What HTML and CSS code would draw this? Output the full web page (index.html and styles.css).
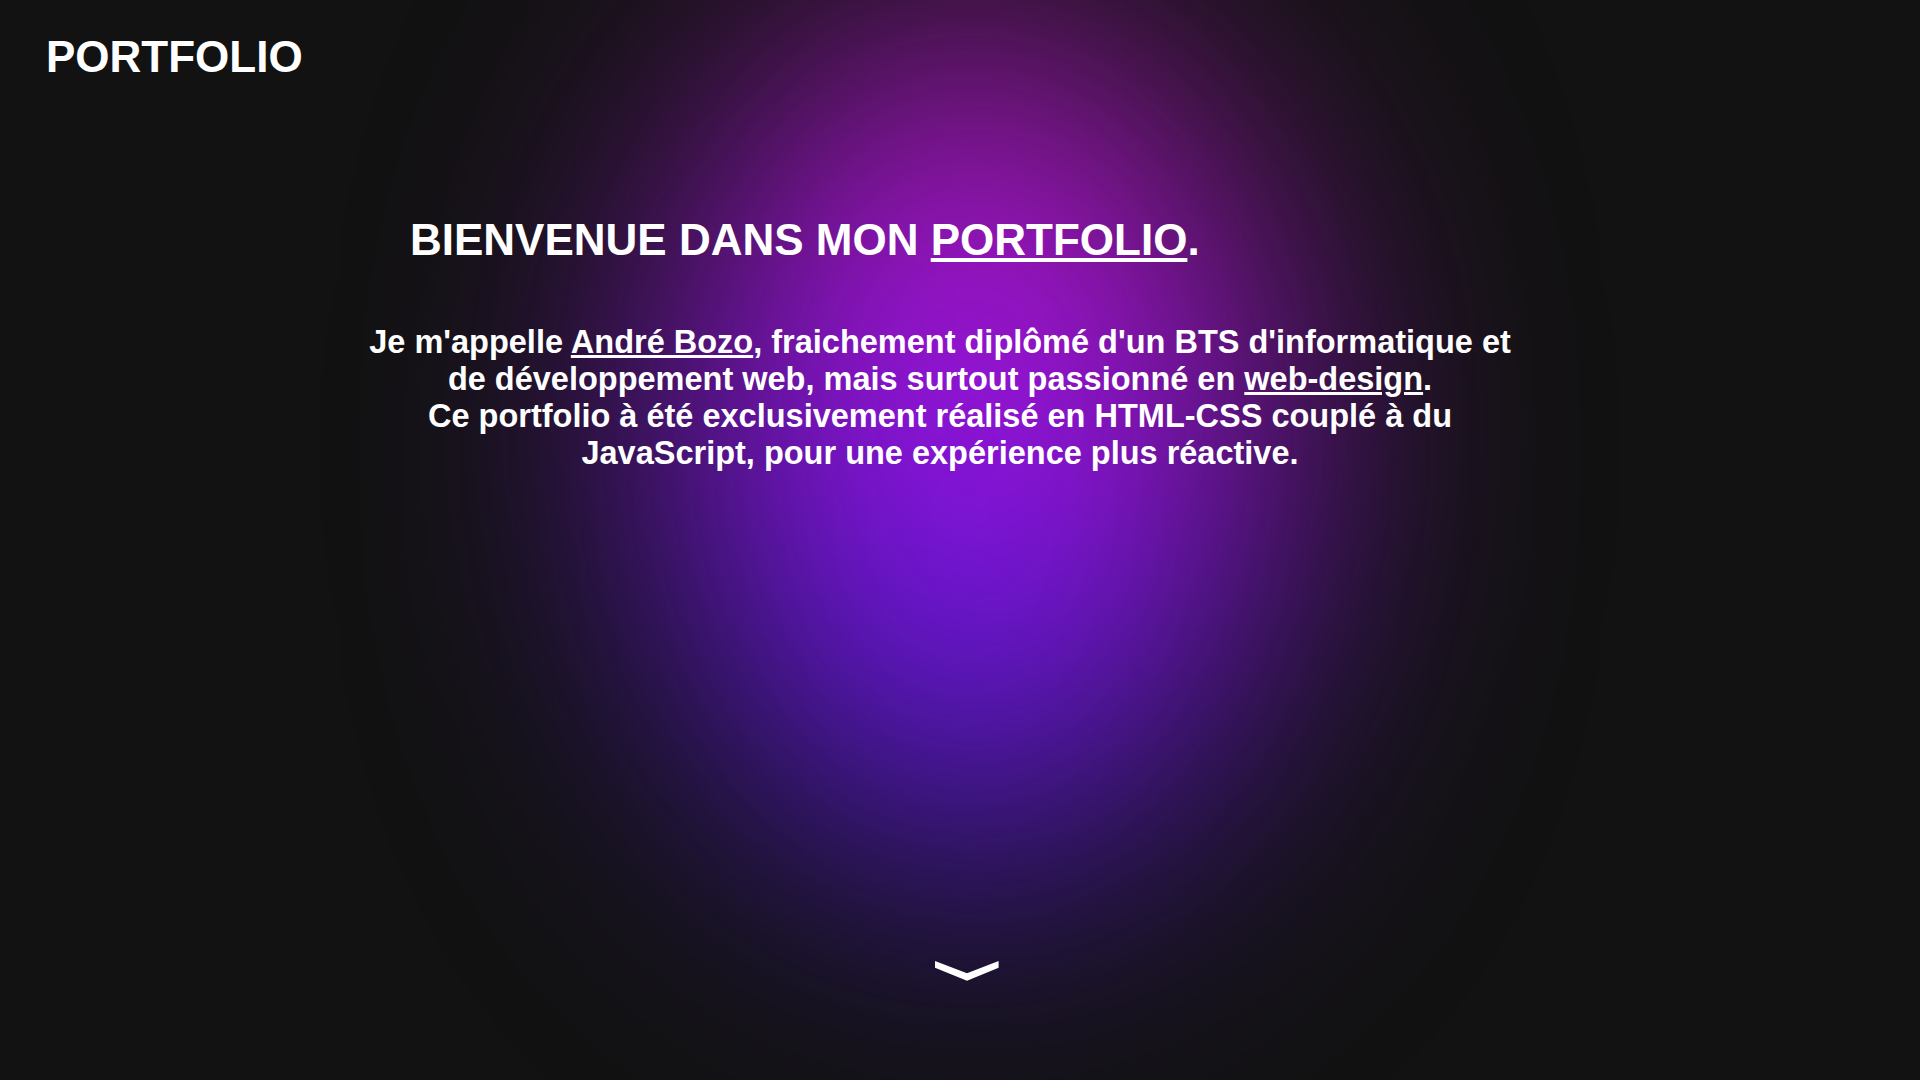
FILE: index.html
```html
<!DOCTYPE html>
<html lang="fr">
<head>
<meta charset="utf-8">
<title>Portfolio - André Bozo</title>
<link rel="stylesheet" href="styles.css">
</head>
<body>
<section class="hero">
  <div class="glow"></div>
  <header class="site-header">
    <div class="logo">PORTFOLIO</div>
  </header>
  <div class="intro">
    <h1 class="intro-title">BIENVENUE DANS MON <a href="#" class="link">PORTFOLIO</a>.</h1>
    <p class="intro-text">Je m'appelle <a href="#" class="link">André Bozo</a>, fraichement diplômé d'un BTS d'informatique et de développement web, mais surtout passionné en <a href="#" class="link">web-design</a>.<br>Ce portfolio à été exclusivement réalisé en HTML-CSS couplé à du JavaScript, pour une expérience plus réactive.</p>
  </div>
  <div class="scroll-down">
    <svg class="chevron" width="64" height="20" viewBox="0 0 64 20"><polygon points="0,0 32,12.2 63.6,0 63.6,6.8 32,19.8 0,6.8" fill="#ffffff"/></svg>
  </div>
</section>
<section class="page-section"></section>
<section class="page-section"></section>
<section class="page-section"></section>
<section class="page-section"></section>
</body>
</html>
```

FILE: styles.css
```css
html {
  background: #121212;
}
::-webkit-scrollbar {
  width: 12px;
}
::-webkit-scrollbar-track {
  background: #151515;
}
::-webkit-scrollbar-thumb {
  background: #2e2e2e;
  border-radius: 6px;
}
body {
  margin: 0;
  background: #121212;
  color: #ffffff;
  font-family: "Liberation Sans", Arial, sans-serif;
  font-weight: bold;
  overflow-x: hidden;
}
.hero {
  position: relative;
  min-height: 100vh;
  display: flex;
  flex-direction: column;
  overflow: hidden;
}
.glow {
  position: absolute;
  left: 670px;
  top: 30px;
  width: 600px;
  height: 840px;
  border-radius: 50%;
  background: linear-gradient(200deg, #c81cb0 0%, #a012e0 42%, #6a16e0 66%, #3a1ec0 100%);
  filter: blur(150px);
  z-index: 0;
}
.site-header, .intro, .scroll-down {
  position: relative;
  z-index: 1;
}
.site-header {
  padding: 32px 0 0 46px;
}
.logo {
  font-size: 44px;
}
.intro {
  width: 1160px;
  margin: 133px 0 0 360px;
}
.intro-title {
  margin: 0;
  padding-left: 50px;
  font-size: 44px;
  font-weight: bold;
}
.intro-text {
  margin: 59px 0 0;
  font-size: 32.5px;
  line-height: 37px;
  text-align: center;
}
.link {
  color: #ffffff;
  text-decoration: underline;
}
.scroll-down {
  margin-top: auto;
  margin-bottom: 99px;
  display: flex;
  justify-content: center;
  padding-left: 14px;
}
.chevron {
  display: block;
}
.page-section {
  min-height: 100vh;
}
```
